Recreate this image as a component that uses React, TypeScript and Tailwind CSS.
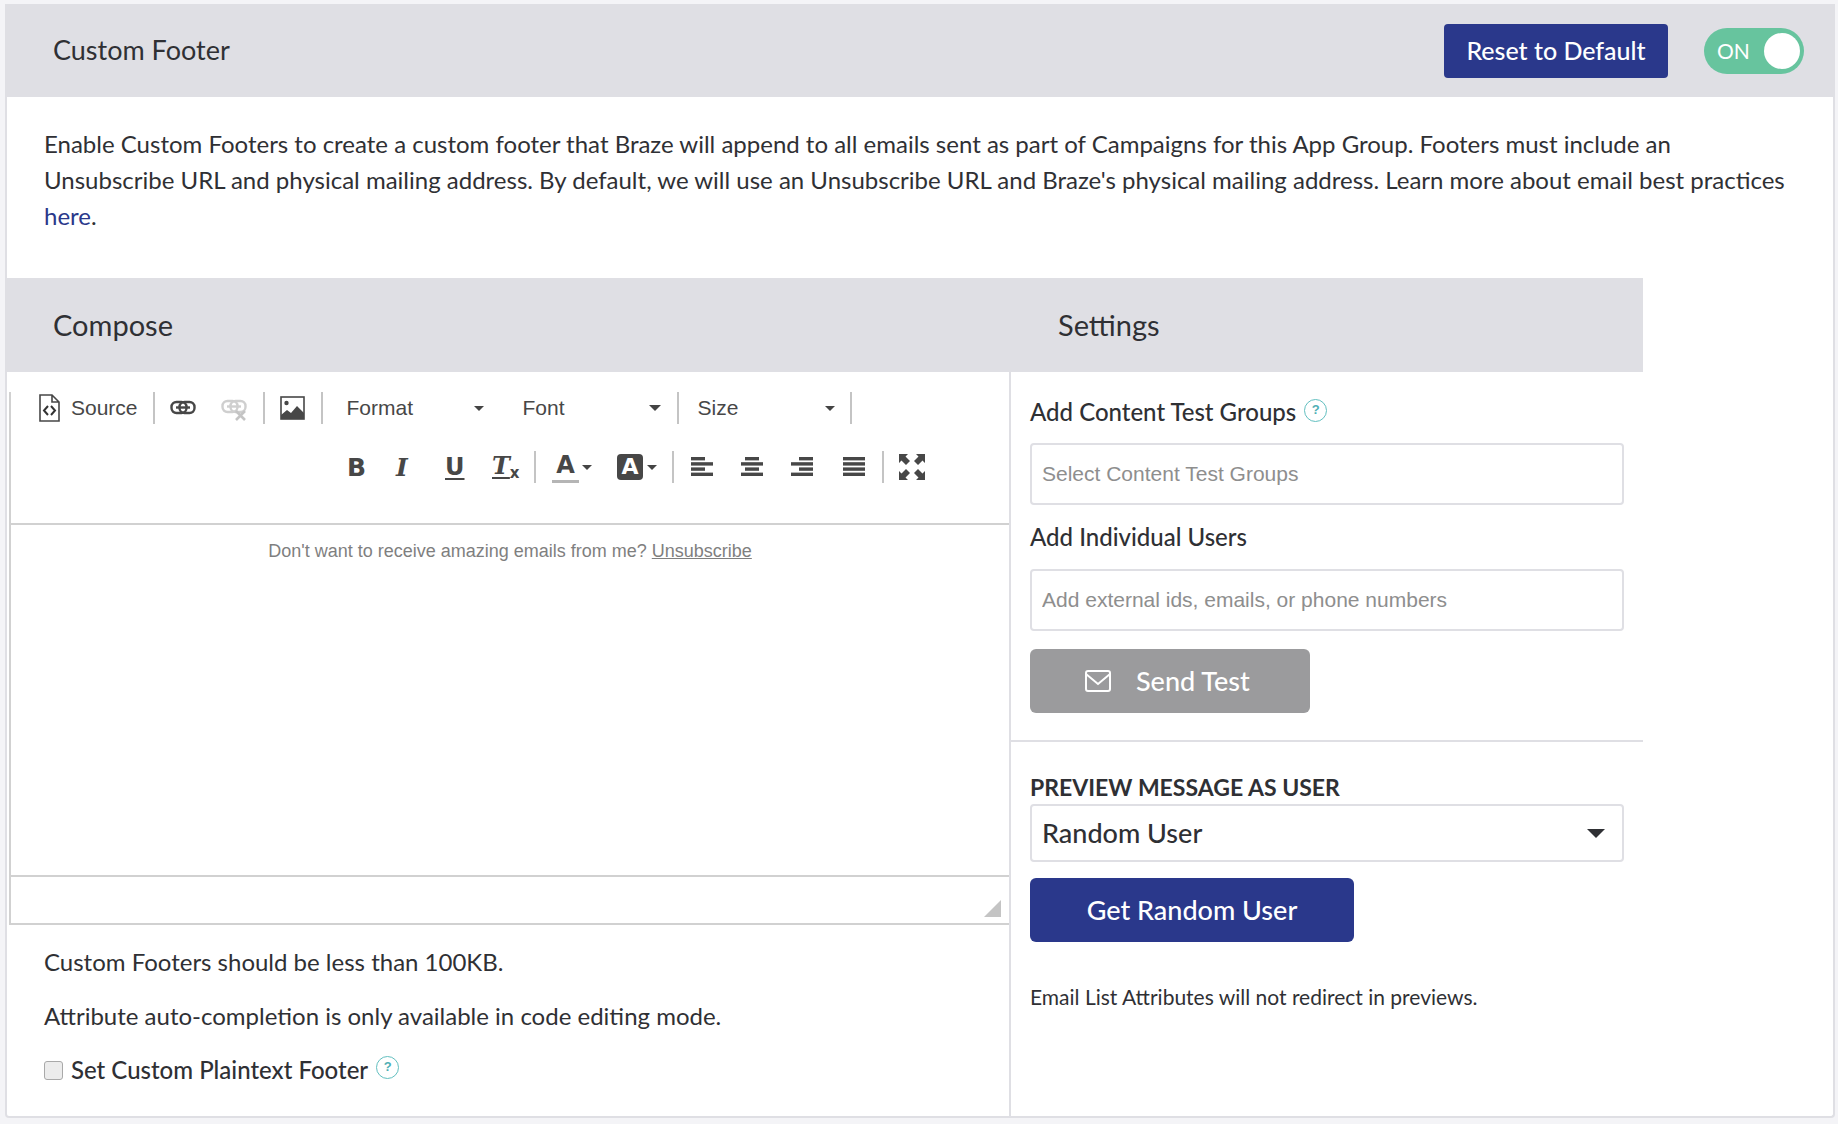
import React from 'react';
import { ChevronDown } from 'lucide-react';

const sans = 'font-["Lato",sans-serif]';

function Sep({ className = '' }: { className?: string }) {
  return <span className={`block w-[2px] h-[32px] bg-[#c4c4c4] shrink-0 ${className}`} />;
}

function Caret({ className = '' }: { className?: string }) {
  return <span className={`block w-0 h-0 border-x-[5px] border-x-transparent border-t-[5px] border-t-[#444] shrink-0 ${className}`} />;
}

function HelpIcon({ className = '' }: { className?: string }) {
  return (
    <span className={`inline-flex items-center justify-center w-[23px] h-[23px] rounded-full border border-[#62bfc0] text-[#4fb0b5] text-[13px] font-bold font-["Liberation_Sans",sans-serif] ${className}`}>
      ?
    </span>
  );
}

function AlignIcon({ rows }: { rows: [number, number][] }) {
  return (
    <svg width="22" height="22" viewBox="0 0 22 22" className="shrink-0 block">
      {rows.map(([x, w], i) => (
        <rect key={i} x={x} y={1 + i * 5.2} width={w} height="3.4" fill="#474747" />
      ))}
    </svg>
  );
}

function SourceIcon() {
  return (
    <svg width="21" height="28" viewBox="0 0 21 28" className="block shrink-0">
      <path d="M1 1h12l7 7v19H1z M13 1v7h7" fill="none" stroke="#474747" strokeWidth="1.6" />
      <path d="M9 12l-4 4.5 4 4.5 M12 12l4 4.5-4 4.5" fill="none" stroke="#333" strokeWidth="2" />
    </svg>
  );
}

function LinkIcon({ color }: { color: string }) {
  return (
    <svg width="26" height="16" viewBox="0 0 26 16" className="block shrink-0">
      <rect x="1.5" y="2" width="15" height="11" rx="5" fill="none" stroke={color} strokeWidth="2.4" />
      <rect x="9.5" y="2" width="15" height="11" rx="5" fill="none" stroke={color} strokeWidth="2.4" />
      <rect x="6" y="6.3" width="14" height="2.4" fill={color} />
    </svg>
  );
}

function UnlinkIcon() {
  return (
    <svg width="26" height="22" viewBox="0 0 26 22" className="block shrink-0">
      <rect x="1.5" y="2" width="15" height="11" rx="5" fill="none" stroke="#cfcfcf" strokeWidth="2.4" />
      <rect x="9.5" y="2" width="15" height="11" rx="5" fill="none" stroke="#cfcfcf" strokeWidth="2.4" />
      <rect x="6" y="6.3" width="14" height="2.4" fill="#cfcfcf" />
      <path d="M15 12l9 9 M24 12l-9 9" stroke="#c4c4c4" strokeWidth="2.6" />
    </svg>
  );
}

function ImageIcon() {
  return (
    <svg width="25" height="24" viewBox="0 0 25 24" className="block shrink-0">
      <rect x="1" y="1" width="23" height="22" fill="#fff" stroke="#474747" strokeWidth="1.6" />
      <circle cx="6.5" cy="7" r="2.2" fill="#474747" />
      <path d="M1 23v-4l6-5 4 3 6-7 7 7v6z" fill="#474747" />
    </svg>
  );
}

function MaximizeIcon() {
  return (
    <svg width="26" height="26" viewBox="0 0 26 26" className="block shrink-0">
      <path d="M0 0h9L6.5 2.5 11 7l-4 4-4.5-4.5L0 9z M26 0v9l-2.5-2.5L19 11l-4-4 4.5-4.5L17 0z M0 26v-9l2.5 2.5L7 15l4 4-4.5 4.5L9 26z M26 26h-9l2.5-2.5L15 19l4-4 4.5 4.5L26 17z" fill="#474747" />
    </svg>
  );
}

function Toolbar() {
  return (
    <div className={`h-[133px] border-b-2 border-[#d1d1d1] font-["Liberation_Sans",sans-serif] text-[21px] text-[#474747]`}>
      <div className="flex items-center h-[32px] mt-[20px] pl-[28px]">
        <SourceIcon />
        <span className="ml-[11px]">Source</span>
        <Sep className="ml-[15px]" />
        <span className="ml-[15px]"><LinkIcon color="#474747" /></span>
        <span className="ml-[25px] mt-[4px]"><UnlinkIcon /></span>
        <Sep className="ml-[16px]" />
        <span className="ml-[15px]"><ImageIcon /></span>
        <Sep className="ml-[16px]" />
        <span className="ml-[24px] w-[127px]">Format</span>
        <Caret />
        <span className="ml-[39px] w-[126px]">Font</span>
        <Caret className="border-x-[6px] border-t-[6px]" />
        <Sep className="ml-[16px]" />
        <span className="ml-[19px] w-[127px]">Size</span>
        <Caret />
        <Sep className="ml-[15px]" />
      </div>
      <div className="flex items-center h-[32px] mt-[27px] pl-[336px]">
        <span className="w-[49px] text-[25px] font-bold font-['DejaVu_Sans',sans-serif] leading-none">B</span>
        <span className="w-[49px] text-[25px] font-bold italic font-['DejaVu_Serif',serif] leading-none">I</span>
        <span className="w-[47px] text-[24px] font-bold font-['DejaVu_Sans',sans-serif] leading-none underline underline-offset-[3px]">U</span>
        <span className="w-[42px] text-[24px] font-bold italic font-['DejaVu_Serif',serif] leading-none underline underline-offset-[3px]">T<span className="text-[15px] not-italic no-underline font-['DejaVu_Sans',sans-serif] inline-block align-[-4px]">x</span></span>
        <Sep />
        <span className="ml-[16px] w-[27px] h-[31px] flex flex-col items-center text-[24px] font-bold font-['DejaVu_Sans',sans-serif] leading-[26px] border-b-[3px] border-[#b5b5b5]">A</span>
        <Caret className="ml-[3px]" />
        <span className="ml-[25px] w-[26px] h-[26px] rounded-[4px] bg-[#474747] text-white flex items-center justify-center text-[22px] font-bold font-['DejaVu_Sans',sans-serif] leading-none">A</span>
        <Caret className="ml-[4px]" />
        <Sep className="ml-[15px]" />
        <span className="ml-[17px]"><AlignIcon rows={[[0, 14], [0, 22], [0, 14], [0, 22]]} /></span>
        <span className="ml-[28px]"><AlignIcon rows={[[4, 14], [0, 22], [4, 14], [0, 22]]} /></span>
        <span className="ml-[28px]"><AlignIcon rows={[[8, 14], [0, 22], [8, 14], [0, 22]]} /></span>
        <span className="ml-[30px]"><AlignIcon rows={[[0, 22], [0, 22], [0, 22], [0, 22]]} /></span>
        <Sep className="ml-[17px]" />
        <span className="ml-[15px]"><MaximizeIcon /></span>
      </div>
    </div>
  );
}

function ComposeColumn() {
  return (
    <div className="w-[1004px] shrink-0 border-r-2 border-[#dfdfe4]">
      <div className="ml-[2px] border-l-2 border-[#d1d1d1]">
        <Toolbar />
        <div className="h-[352px] border-b-2 border-[#d1d1d1] pt-[13px] text-center font-['Liberation_Sans',sans-serif] text-[18px] leading-[26px] text-[#7f7f7f]">
          Don't want to receive amazing emails from me? <span className="underline">Unsubscribe</span>
        </div>
        <div className="relative h-[48px] border-b-2 border-[#d1d1d1]">
          <span className="absolute right-[8px] bottom-[6px] w-0 h-0 border-l-[17px] border-l-transparent border-b-[17px] border-b-[#c4c4c4]" />
        </div>
      </div>
      <div className="pl-[37px] pt-[19px] text-[24px] text-[#2f3034]">
        <p className="leading-[36px]">Custom Footers should be less than 100KB.</p>
        <p className="leading-[36px] mt-[18px]">Attribute auto-completion is only available in code editing mode.</p>
        <div className="flex items-center mt-[18px] h-[36px]">
          <input type="checkbox" readOnly className="w-[19px] h-[19px] rounded-[3px] appearance-none border border-[#a9a9a9] bg-[#ececec]" />
          <span className="ml-[8px] font-medium">Set Custom Plaintext Footer</span>
          <HelpIcon className="ml-[8px] -mt-[6px]" />
        </div>
      </div>
    </div>
  );
}

function SettingsColumn() {
  return (
    <div className="w-[632px] shrink-0">
      <div className="px-[19px] pt-[24px]">
        <div className="flex items-center h-[32px]">
          <span className="text-[24px] font-medium text-[#2f3034]">Add Content Test Groups</span>
          <HelpIcon className="ml-[8px] -mt-[4px]" />
        </div>
        <input placeholder="Select Content Test Groups" className="mt-[15px] block w-full h-[62px] rounded-[4px] border-2 border-[#dfdfe4] px-[10px] font-['Liberation_Sans',sans-serif] text-[21px] placeholder:text-[#8e8e8e]" />
        <div className="mt-[16px] h-[32px] flex items-center text-[24px] font-medium text-[#2f3034]">Add Individual Users</div>
        <input placeholder="Add external ids, emails, or phone numbers" className="mt-[16px] block w-full h-[62px] rounded-[4px] border-2 border-[#dfdfe4] px-[10px] font-['Liberation_Sans',sans-serif] text-[21px] placeholder:text-[#8e8e8e]" />
        <button className="mt-[18px] w-[280px] h-[64px] rounded-[6px] bg-[#9b9b9d] text-white text-[27px] font-medium flex items-center pl-[55px]">
          <svg width="26" height="22" viewBox="0 0 26 22" className="block">
            <rect x="1" y="1" width="24" height="20" rx="2" fill="none" stroke="#fff" strokeWidth="2" />
            <path d="M1 4l12 10L25 4" fill="none" stroke="#fff" strokeWidth="2" />
          </svg>
          <span className="ml-[25px]">Send Test</span>
        </button>
      </div>
      <div className="mt-[27px] border-t-2 border-[#dfdfe4]" />
      <div className="px-[19px] pt-[30px]">
        <div className="text-[23px] leading-[30px] font-bold text-[#2f3034]">PREVIEW MESSAGE AS USER</div>
        <div className="mt-[2px] h-[58px] rounded-[4px] border-2 border-[#dfdfe4] flex items-center justify-between pl-[10px] pr-[17px] text-[27px] text-[#2f3034] font-medium">
          Random User
          <span className="block w-0 h-0 border-x-[9px] border-x-transparent border-t-[9px] border-t-[#2f3034]" />
        </div>
        <button className="mt-[16px] w-[324px] h-[64px] rounded-[6px] bg-[#2a388b] text-white text-[27px] font-medium">Get Random User</button>
        <p className="mt-[41px] text-[21px] leading-[28px] text-[#2f3034]">Email List Attributes will not redirect in previews.</p>
      </div>
    </div>
  );
}

export default function App() {
  return (
    <div className={`w-[1838px] h-[1124px] bg-[#f4f4f7] pt-[4px] pl-[7px] ${sans}`}>
      <div className="w-[1826px] h-[1112px] bg-white border-b-2 border-x-2 border-[#dfdfe4] rounded-b-[4px] -ml-[2px] box-content">
        {/* Page header */}
        <div className="h-[93px] bg-[#dfdfe4] flex items-center pl-[46px] pr-[29px]">
          <h1 className="text-[27px] font-normal text-[#2f3034]">Custom Footer</h1>
          <button className="ml-auto w-[224px] h-[54px] rounded-[4px] bg-[#2a388b] text-white text-[25px] font-medium">Reset to Default</button>
          <div className="ml-[36px] w-[100px] h-[46px] rounded-full bg-[#67c49e] flex items-center justify-between pl-[13px] pr-[4px] text-white text-[21px]">
            ON
            <span className="block w-[36px] h-[36px] rounded-full bg-white" />
          </div>
        </div>

        {/* Description */}
        <div className="h-[181px] pl-[37px] pt-[29px] pr-[40px] text-[24px] leading-[36px] text-[#2f3034]">
          Enable Custom Footers to create a custom footer that Braze will append to all emails sent as part of Campaigns for this App Group. Footers must include an Unsubscribe URL and physical mailing address. By default, we will use an Unsubscribe URL and Braze's physical mailing address. Learn more about email best practices <span className="text-[#2a388b]">here</span>.
        </div>

        {/* Section bands */}
        <div className="w-[1636px] h-[94px] bg-[#dfdfe4] flex items-center text-[29px] text-[#2f3034]">
          <span className="ml-[46px] w-[1005px]">Compose</span>
          <span>Settings</span>
        </div>

        <div className="flex w-[1636px] h-[744px]">
          <ComposeColumn />
          <SettingsColumn />
        </div>
      </div>
    </div>
  );
}
